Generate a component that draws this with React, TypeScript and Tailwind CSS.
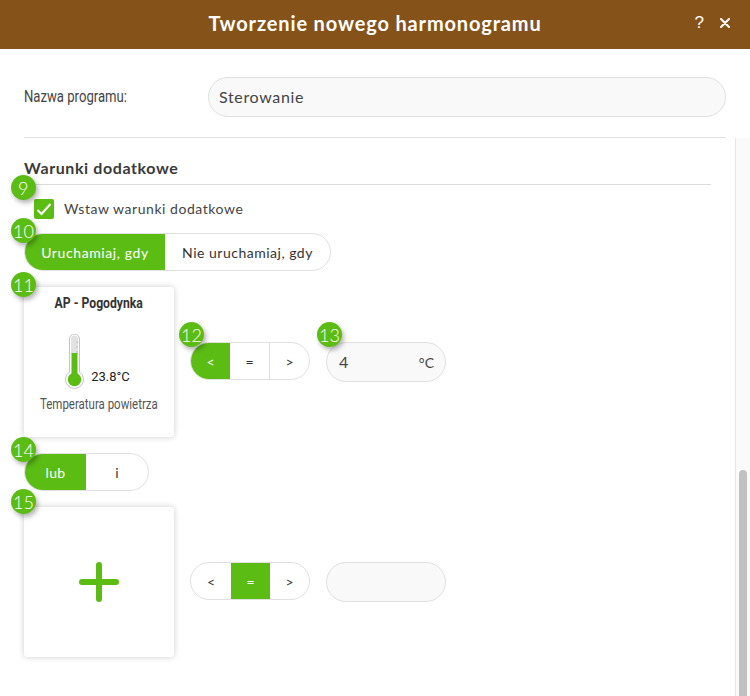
import React from 'react';

const green = 'bg-[#5bbc14]';

function Badge({ n, className }: { n: number; className: string }) {
  return (
    <div className={`absolute z-10 flex h-[25px] w-[25px] items-center justify-center rounded-full ${green} text-[18px] font-light leading-none text-white shadow-[2px_3px_5px_rgba(0,0,0,0.3)] ${className}`}>
      {n}
    </div>
  );
}

function Segments({ items, active, cols, className }: { items: string[]; active: number; cols: string[]; className: string }) {
  return (
    <div className={`flex h-[38px] overflow-hidden rounded-[19px] border border-[#e0e0e0] bg-white text-[14px] ${className}`}>
      {items.map((item, i) => (
        <div
          key={item}
          className={`flex items-center justify-center ${cols[i]} ${i > 0 && i !== active && i - 1 !== active ? 'border-l border-[#e0e0e0]' : ''} ${i === active ? `${green} text-white` : 'text-[#333]'}`}
        >
          {item}
        </div>
      ))}
    </div>
  );
}

function Thermometer() {
  return (
    <svg width="20" height="56" viewBox="0 0 20 56" className="shrink-0">
      <path d="M4.5 5a5 5 0 0 1 10 0v33a9 9 0 1 1-10 0z" fill="#fff" stroke="#c4c4c4" />
      <path d="M6 5a3.5 3.5 0 0 1 7 0v15h-7z" fill="#e2e2e2" />
      <rect x="6.5" y="19" width="6" height="24" fill="#5bbc14" />
      <circle cx="9.5" cy="45.5" r="6.7" fill="#5bbc14" />
      <path d="M11 8h2M11 13h2M11 18h2" stroke="#aaa" strokeWidth="0.7" />
    </svg>
  );
}

export default function App() {
  return (
    <div className="flex h-[696px] w-[750px] flex-col overflow-hidden bg-white font-['Lato',sans-serif] text-[#333]">
      <header className="relative flex h-[49px] shrink-0 items-center justify-center bg-[#855319] pb-[3px] text-[20px] font-bold tracking-[0.85px] text-white">
        Tworzenie nowego harmonogramu
        <div className="absolute right-[20px] top-0 flex h-full items-center gap-[16px] pb-[3px] text-[17px] font-normal tracking-normal">
          <span className="font-['Liberation_Sans',sans-serif]">?</span>
          <svg width="10" height="10" viewBox="0 0 10 10" stroke="#fff" strokeWidth="2" strokeLinecap="round">
            <path d="M1 1l8 8M9 1l-8 8" />
          </svg>
        </div>
      </header>

      <div className="shrink-0 px-6 pt-7">
        <div className="flex h-10 items-center">
          <div className="w-[184px]">
            <div className="origin-left scale-x-[0.82] whitespace-nowrap font-['Roboto',sans-serif] text-[16px] text-[#444]">Nazwa programu:</div>
          </div>
          <div className="flex h-10 w-[518px] items-center rounded-[20px] border border-[#e0e0e0] bg-[#f9f9f9] px-[10px] text-[16px] tracking-[0.65px] text-[#444]">
            Sterowanie
          </div>
        </div>
        <div className="mt-5 h-px w-[702px] bg-[#e0e0e0]" />
      </div>

      <div className="flex min-h-0 flex-1">
        <main className="w-[735px] shrink-0 pl-6 pt-[21px]">
          <div className="relative w-[687px] border-b border-[#ddd] pb-[7px] text-[16px] font-bold leading-[18px] tracking-[0.6px] text-[#3a3a3a]">
            Warunki dodatkowe
            <Badge n={9} className="left-[-13px] top-[16px]" />
          </div>

          <div className="mt-[14px] ml-[10px] flex h-5 items-center gap-[10px] text-[14px] tracking-[0.55px] text-[#444]">
            <div className={`flex h-5 w-5 items-center justify-center rounded-[2px] ${green}`}>
              <svg width="16" height="13" viewBox="0 0 16 13" fill="none" stroke="#fff" strokeWidth="2">
                <path d="M1.5 7l4 4 9-10" />
              </svg>
            </div>
            <span className="mb-[2px]">Wstaw warunki dodatkowe</span>
          </div>

          <div className="relative mt-[14px] w-fit">
            <Badge n={10} className="left-[-13px] top-[-15px]" />
            <Segments items={['Uruchamiaj, gdy', 'Nie uruchamiaj, gdy']} active={0} cols={['w-[140px] tracking-[0.6px]', 'w-[165px] tracking-[0.5px]']} className="w-[307px]" />
          </div>

          <div className="relative mt-4 flex items-center gap-4">
            <Badge n={11} className="left-[-13px] top-[-15px]" />
            <div className="flex h-[150px] w-[150px] shrink-0 flex-col items-center rounded-[3px] bg-white font-['Roboto',sans-serif] shadow-[0_0_6px_rgba(0,0,0,0.2)]">
              <div className="mt-2 scale-x-[0.87] whitespace-nowrap text-[14px] font-bold leading-4 text-[#333]">AP - Pogodynka</div>
              <div className="mt-[23px] flex h-[56px] items-end gap-[6px] pr-[3px]">
                <Thermometer />
                <span className="mb-[5px] text-[13px] leading-4 text-[#222]">23.8°C</span>
              </div>
              <div className="mt-[6px] scale-x-[0.82] whitespace-nowrap text-[14px] leading-4 text-[#555]">Temperatura powietrza</div>
            </div>
            <div className="relative h-10">
              <Badge n={12} className="left-[-11px] top-[-20px]" />
              <Segments items={['<', '=', '>']} active={0} cols={['w-[39px]', 'w-[39px]', 'w-[40px]']} className="w-[120px]" />
            </div>
            <div className="relative">
              <Badge n={13} className="left-[-9px] top-[-20px]" />
              <div className="flex h-10 w-[120px] items-center justify-between rounded-[20px] border border-[#e0e0e0] bg-[#f9f9f9] pl-3 pr-[11px] text-[14px] text-[#444]">
                <span className="text-[16px]">4</span>
                <span>°C</span>
              </div>
            </div>
          </div>

          <div className="relative mt-4 w-fit">
            <Badge n={14} className="left-[-13px] top-[-16px]" />
            <Segments items={['lub', 'i']} active={0} cols={['w-[61px] tracking-[0.4px]', 'w-[62px]']} className="w-[125px]" />
          </div>

          <div className="relative mt-4 flex items-center gap-4">
            <Badge n={15} className="left-[-13px] top-[-18px]" />
            <div className="flex h-[150px] w-[150px] shrink-0 items-center justify-center rounded-[3px] bg-white shadow-[0_0_6px_rgba(0,0,0,0.2)]">
              <svg width="40" height="40" viewBox="0 0 40 40" stroke="#5bbc14" strokeWidth="6" strokeLinecap="round">
                <path d="M20 3v34M3 20h34" />
              </svg>
            </div>
            <div className="h-10">
              <Segments items={['<', '=', '>']} active={1} cols={['w-[40px]', 'w-[39px]', 'w-[39px]']} className="w-[120px]" />
            </div>
            <div className="h-10 w-[120px] rounded-[20px] border border-[#e0e0e0] bg-[#f9f9f9]" />
          </div>
        </main>

        <div className="flex w-[15px] flex-col justify-end border-l border-[#e6e6e6] bg-[#fafafa] pl-[3px]">
          <div className="h-[226px] w-2 rounded-t bg-[#c1c1c1]" />
        </div>
      </div>
    </div>
  );
}
